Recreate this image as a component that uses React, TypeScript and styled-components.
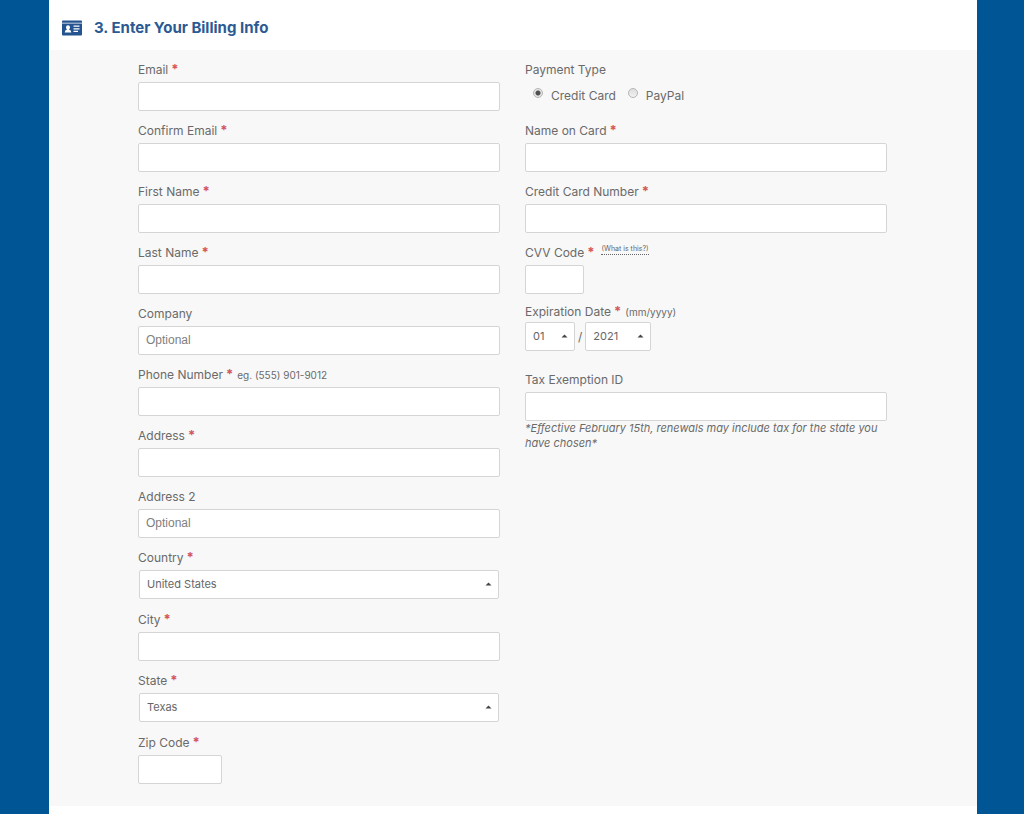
import React, { useId } from "react";
import styled, { createGlobalStyle } from "styled-components";

const GlobalStyle = createGlobalStyle`
  *, *::before, *::after { box-sizing: border-box; }
  body {
    margin: 0;
    background: #005695;
    color: #6a6a6a;
    font-family: Inter, "Liberation Sans", sans-serif;
    font-size: 12px;
  }
`;

const Page = styled.main`
  margin: 0 47px 0 49px;
  padding-bottom: 8px;
  background: #fff;
`;

const Header = styled.header`
  display: flex;
  align-items: center;
  gap: 12px;
  height: 50px;
  padding: 5px 13px 0;
  color: #2b5a93;
`;

const Title = styled.h2`
  margin: 0;
  padding-top: 1px;
  font-size: 15px;
  font-weight: 700;
  line-height: 20px;
`;

const Panel = styled.form`
  display: grid;
  grid-template-columns: 1fr 1fr;
  align-items: start;
  gap: 25px;
  padding: 8px 90px 22px 89px;
  background: #f8f8f8;
`;

const Column = styled.div`
  display: flex;
  flex-direction: column;
  gap: 8px;
  min-width: 0;
`;

const FieldBox = styled.div<{ $roomy?: boolean }>`
  padding-bottom: ${(p) => (p.$roomy ? 1 : 0)}px;
`;

const LabelRow = styled.div<{ $tight?: boolean }>`
  display: flex;
  align-items: center;
  gap: 4px;
  height: ${(p) => (p.$tight ? 20 : 24)}px;
  line-height: 20px;
  white-space: nowrap;
`;

const Star = styled.span`
  margin-left: 3px;
  color: #d4555b;
  font-size: 13px;
  font-weight: 700;
  line-height: 1;
`;

const Hint = styled.span`
  font-size: 10px;
`;

const HelpLink = styled.a`
  align-self: flex-start;
  margin: 2px 0 0 3px;
  border-bottom: 1px dotted #666;
  color: #666;
  font-size: 7px;
  line-height: 11px;
  text-decoration: none;
`;

const Input = styled.input<{ $width?: number }>`
  display: block;
  width: ${(p) => (p.$width ? `${p.$width}px` : "100%")};
  height: 29px;
  padding: 0 7px 2px;
  border: 1px solid #d5d5d5;
  border-radius: 2px;
  background: #fff;
  color: #666;
  font-family: "Liberation Sans", Arial, sans-serif;
  font-size: 12px;

  &::placeholder {
    color: #808080;
    opacity: 1;
  }
`;

const SelectWrap = styled.div<{ $width?: number }>`
  position: relative;
  width: ${(p) => (p.$width ? `${p.$width}px` : "auto")};
  margin: ${(p) => (p.$width ? "0" : "0 1px")};
`;

const SelectBox = styled.select`
  display: block;
  width: 100%;
  height: 29px;
  padding: 0 16px 2px 7px;
  appearance: none;
  border: 1px solid #d5d5d5;
  border-radius: 2px;
  background: #fff;
  color: #666;
  font-family: inherit;
  font-size: 11px;
`;

const Arrow = styled.svg`
  position: absolute;
  top: 12px;
  right: 7px;
  pointer-events: none;
`;

const DateRow = styled.div`
  display: flex;
  align-items: center;
  gap: 3px;
`;

const Group = styled.fieldset`
  margin: 0;
  padding: 0;
  border: 0;
  min-width: 0;
`;

const PaymentGroup = styled(Group)`
  height: 53px;
`;

const DateGroup = styled(Group)`
  padding-bottom: 9px;
`;

const Legend = styled.legend`
  padding: 0;
`;

const RadioRow = styled.div`
  display: flex;
  gap: 12px;
  padding: 4px 0 0 8px;
`;

const RadioLabel = styled.label`
  display: flex;
  align-items: flex-start;
  gap: 8px;
  line-height: 20px;
`;

const Radio = styled.input`
  appearance: none;
  width: 10px;
  height: 10px;
  margin: 2px 0 0;
  border: 1px solid #b5b5b5;
  border-radius: 50%;
  background: linear-gradient(#dedede, #f2f2f2);

  &:checked {
    background: radial-gradient(circle, #505050 0 2px, #e4e4e4 3px);
  }
`;

const Note = styled.p`
  margin: 0;
  font-size: 11px;
  font-style: italic;
  line-height: 15px;
`;

const CardIcon = () => (
  <svg width="20" height="16" viewBox="0 0 20 16" aria-hidden="true">
    <path fill="#24548f" d="M1 .5h18q1 0 1 1v1.3H0V1.500q0-1 1-1zM0 3.600h20v10.900q0 1-1 1H1q-1 0-1-1z" />
    <path fill="#fff" d="M6 5.200a2 2 0 0 1 2 2q0 1.400-1 2.200 2.200.4 2.300 3.100H2.700q.1-2.700 2.300-3.100-1-.8-1-2.200a2 2 0 0 1 2-2zM11.500 5.600h6v1.200h-6zM11.500 8.200h6v1.200h-6zM11.500 10.800h4.500V12h-4.500z" />
  </svg>
);

type FieldProps = {
  label: string;
  required?: boolean;
  hint?: string;
  placeholder?: string;
  width?: number;
  type?: string;
  help?: string;
  note?: string;
};

function TextField({ label, required, hint, placeholder, width, type = "text", help, note }: FieldProps) {
  const id = useId();
  return (
    <FieldBox>
      <LabelRow>
        <label htmlFor={id}>
          {label}
          {required && <Star>*</Star>}
        </label>
        {hint && <Hint>{hint}</Hint>}
        {help && <HelpLink href="#cvv">{help}</HelpLink>}
      </LabelRow>
      <Input id={id} type={type} placeholder={placeholder} $width={width} />
      {note && <Note>{note}</Note>}
    </FieldBox>
  );
}

type SelectProps = { id?: string; value: string; width?: number; name?: string };

function Select({ id, value, width, name }: SelectProps) {
  return (
    <SelectWrap $width={width}>
      <SelectBox id={id} aria-label={name} defaultValue={value}>
        <option>{value}</option>
      </SelectBox>
      <Arrow width="7" height="4" viewBox="0 0 7 4" aria-hidden="true">
        <path fill="#444" d="M.5 3.500 3.500.5l3 3z" />
      </Arrow>
    </SelectWrap>
  );
}

function SelectField({ label, value }: { label: string; value: string }) {
  const id = useId();
  return (
    <FieldBox $roomy>
      <LabelRow>
        <label htmlFor={id}>
          {label}
          <Star>*</Star>
        </label>
      </LabelRow>
      <Select id={id} value={value} />
    </FieldBox>
  );
}

export default function App() {
  return (
    <>
      <GlobalStyle />
      <Page>
        <Header>
          <CardIcon />
          <Title>3. Enter Your Billing Info</Title>
        </Header>
        <Panel>
          <Column>
            <TextField label="Email" type="email" required />
            <TextField label="Confirm Email" type="email" required />
            <TextField label="First Name" required />
            <TextField label="Last Name" required />
            <TextField label="Company" placeholder="Optional" />
            <TextField label="Phone Number" type="tel" hint="eg. (555) 901-9012" required />
            <TextField label="Address" required />
            <TextField label="Address 2" placeholder="Optional" />
            <SelectField label="Country" value="United States" />
            <TextField label="City" required />
            <SelectField label="State" value="Texas" />
            <TextField label="Zip Code" width={84} required />
          </Column>
          <Column>
            <PaymentGroup>
              <Legend>
                <LabelRow>Payment Type</LabelRow>
              </Legend>
              <RadioRow>
                <RadioLabel>
                  <Radio type="radio" name="payment" defaultChecked />
                  Credit Card
                </RadioLabel>
                <RadioLabel>
                  <Radio type="radio" name="payment" />
                  PayPal
                </RadioLabel>
              </RadioRow>
            </PaymentGroup>
            <TextField label="Name on Card" required />
            <TextField label="Credit Card Number" required />
            <TextField label="CVV Code" width={59} help="(What is this?)" required />
            <DateGroup>
              <Legend>
                <LabelRow $tight>
                  <span>
                    Expiration Date
                    <Star>*</Star>
                  </span>
                  <Hint>(mm/yyyy)</Hint>
                </LabelRow>
              </Legend>
              <DateRow>
                <Select name="Expiration month" value="01" width={50} />
                <span>/</span>
                <Select name="Expiration year" value="2021" width={66} />
              </DateRow>
            </DateGroup>
            <TextField
              label="Tax Exemption ID"
              note="*Effective February 15th, renewals may include tax for the state you have chosen*"
            />
          </Column>
        </Panel>
      </Page>
    </>
  );
}
